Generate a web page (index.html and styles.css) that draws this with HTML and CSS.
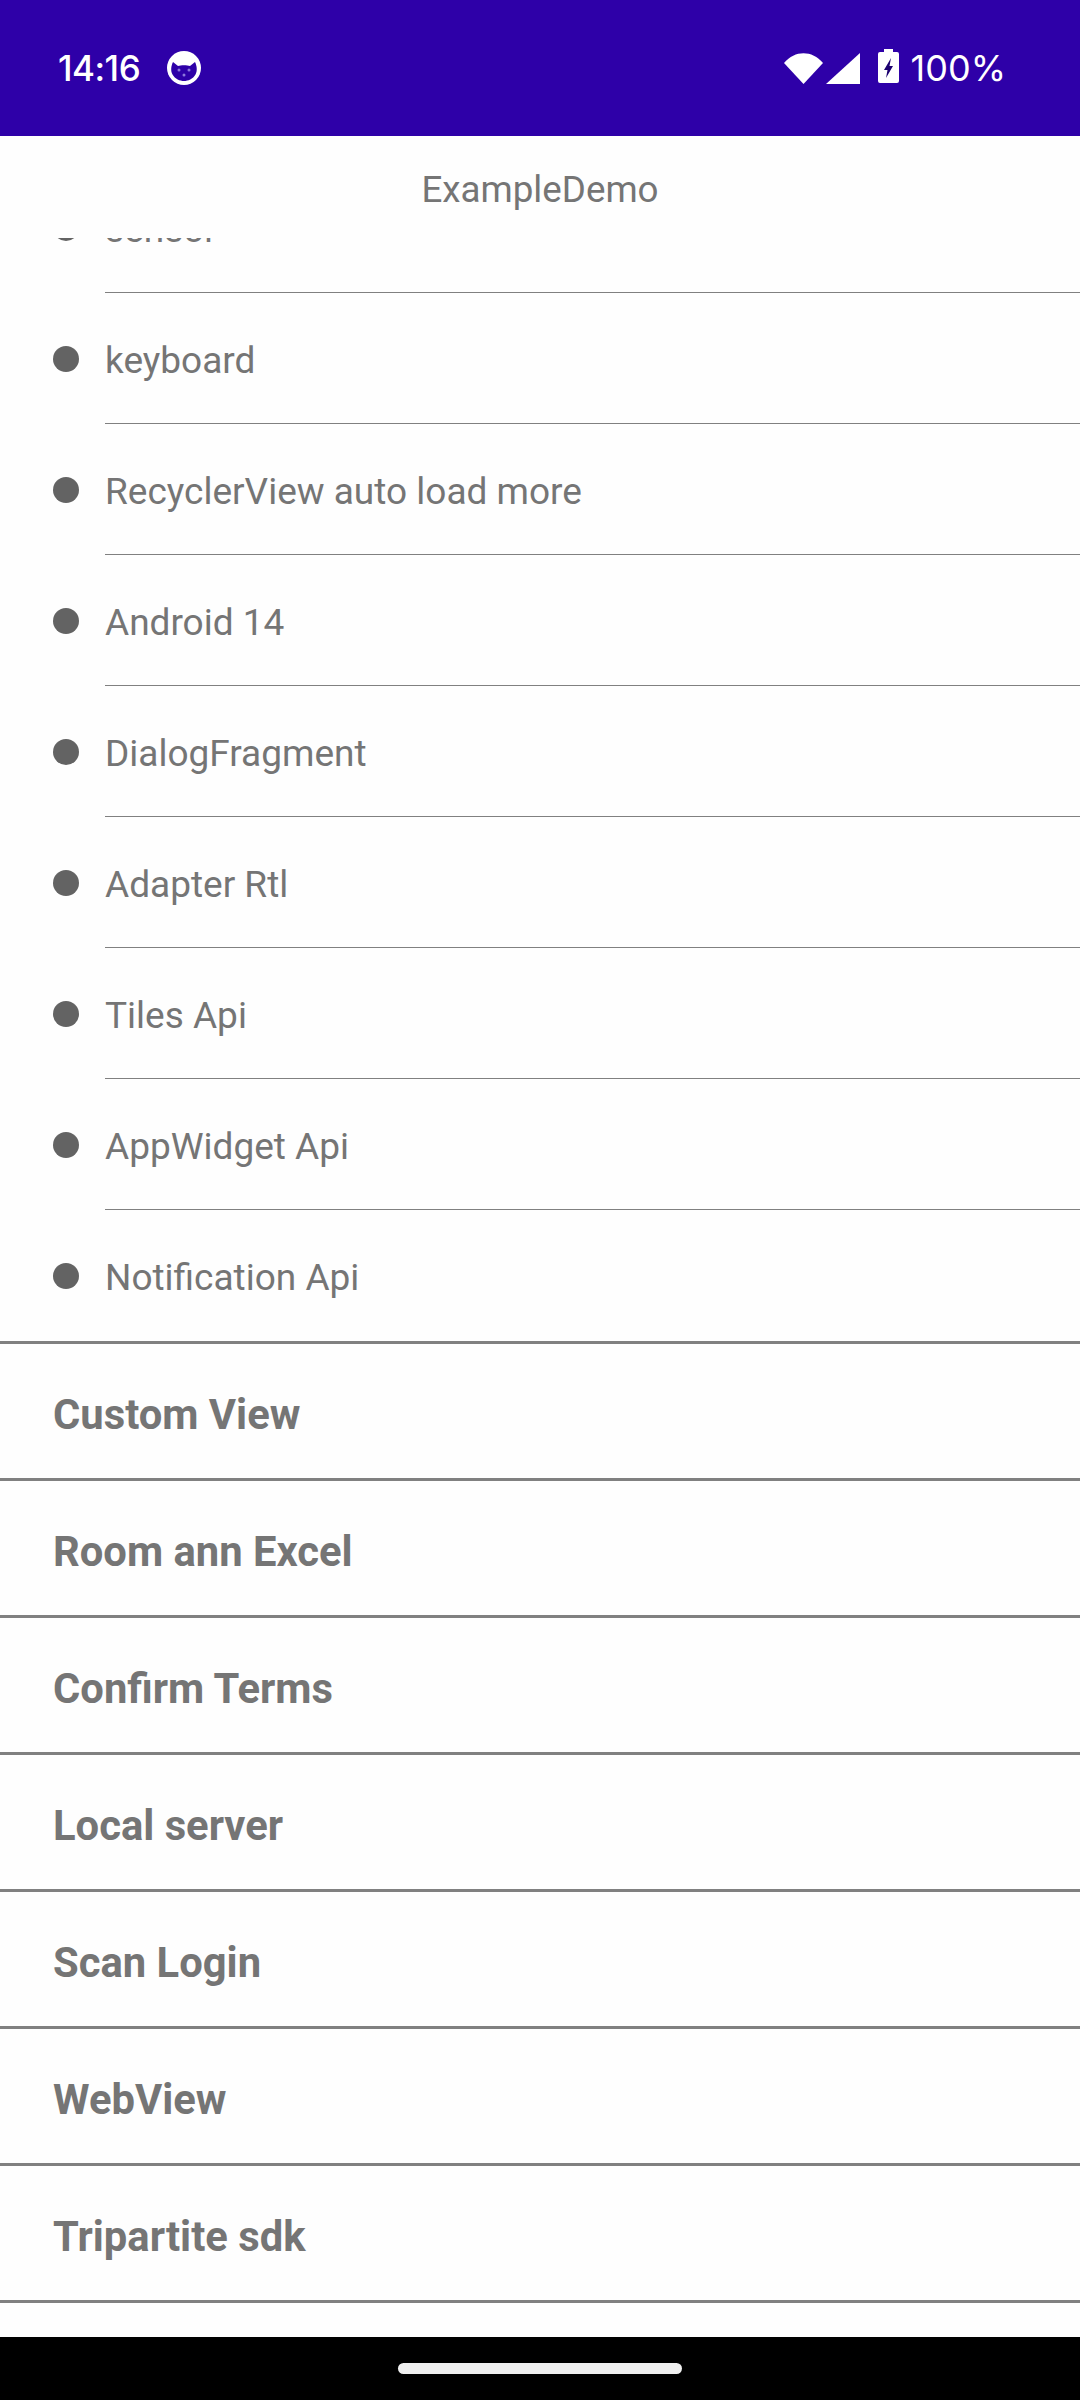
FILE: index.html
```html
<!DOCTYPE html>
<html lang="en">
<head>
    <meta charset="UTF-8">
    <meta name="viewport" content="width=device-width, initial-scale=1.0">
    <title>ExampleDemo</title>
    <link rel="stylesheet" href="styles.css">
</head>
<body>
    <div class="main">

        <div class="status-bar">
            <div class="status-left">
                <span class="time">14:16</span>
                <svg class="cat-icon" width="34" height="34" viewBox="0 0 34 34">
                    <circle cx="17" cy="17" r="17" fill="#fff"/>
                    <path d="M6 11 L11 15 C14 14 20 14 23 15 L28 11 C30 15 30.500 20 28.500 23.500 C26 28 21 30 17 30 C13 30 8 28 5.500 23.500 C3.500 20 4 15 6 11 Z" fill="#2e00a8"/>
                    <circle cx="12" cy="19" r="1.500" fill="#8d78dc"/>
                    <circle cx="22" cy="19" r="1.500" fill="#8d78dc"/>
                    <circle cx="17" cy="24" r="1.500" fill="#8d78dc"/>
                </svg>
            </div>
            <div class="status-right">
                <svg class="wifi-icon" width="39" height="31" viewBox="0 0 39 31">
                    <path d="M0 10 C11 -3 28 -3 39 10 L19.500 31 Z" fill="#fff"/>
                </svg>
                <svg class="signal-icon" width="34" height="31" viewBox="0 0 34 31">
                    <path d="M34 0 V31 H0 Z" fill="#fff"/>
                </svg>
                <svg class="battery-icon" width="21" height="34" viewBox="0 0 21 34">
                    <path d="M6 0 H15 V3 H19 Q21 3 21 5 V32 Q21 34 19 34 H2 Q0 34 0 32 V5 Q0 3 2 3 H6 Z" fill="#fff"/>
                    <path d="M13 9 L6 21 H9.500 L8 29 L15 17 H11.500 Z" fill="#1c0070"/>
                </svg>
                <span class="battery">100%</span>
            </div>
        </div>

        <div class="title-bar">ExampleDemo</div>

        <div class="list">
            <div class="sub-list">
                <div class="sub-item"><span class="dot"></span><span class="sub-text">sensor</span></div>
                <div class="sub-item"><span class="dot"></span><span class="sub-text">keyboard</span></div>
                <div class="sub-item"><span class="dot"></span><span class="sub-text">RecyclerView auto load more</span></div>
                <div class="sub-item"><span class="dot"></span><span class="sub-text">Android 14</span></div>
                <div class="sub-item"><span class="dot"></span><span class="sub-text">DialogFragment</span></div>
                <div class="sub-item"><span class="dot"></span><span class="sub-text">Adapter Rtl</span></div>
                <div class="sub-item"><span class="dot"></span><span class="sub-text">Tiles Api</span></div>
                <div class="sub-item"><span class="dot"></span><span class="sub-text">AppWidget Api</span></div>
                <div class="sub-item"><span class="dot"></span><span class="sub-text">Notification Api</span></div>
            </div>
            <div class="group">Custom View</div>
            <div class="group">Room ann Excel</div>
            <div class="group">Confirm Terms</div>
            <div class="group">Local server</div>
            <div class="group">Scan Login</div>
            <div class="group">WebView</div>
            <div class="group">Tripartite sdk</div>
        </div>

        <div class="nav-bar">
            <div class="nav-pill"></div>
        </div>

    </div>
</body>
</html>
```

FILE: styles.css
```css
* {
    margin: 0;
    padding: 0;
    box-sizing: border-box;
}

body {
    font-family: Roboto, sans-serif;
    background-color: #fefefe;
}

.main {
    width: 1080px;
    height: 2400px;
    display: flex;
    flex-direction: column;
    overflow: hidden;
    background-color: #fefefe;
    color: #757575;
}

.status-bar {
    height: 136px;
    flex-shrink: 0;
    background-color: #2e00a8;
    color: #fff;
    display: flex;
    justify-content: space-between;
    align-items: center;
    padding: 0 74px 0 58px;
    font-family: Inter, sans-serif;
}

.status-left,
.status-right {
    display: flex;
    align-items: center;
}

.time {
    font-size: 35px;
    font-weight: 500;
    letter-spacing: -0.5px;
    margin-right: 27px;
}

.battery {
    font-size: 36px;
    margin-left: 12px;
}

.signal-icon {
    margin-left: 3px;
}

.battery-icon {
    margin-left: 18px;
    margin-bottom: 4px;
}

.title-bar {
    height: 102px;
    flex-shrink: 0;
    text-align: center;
    font-size: 36.75px;
    line-height: 107px;
}

.list {
    flex: 1;
    overflow: hidden;
}

.sub-list {
    margin-top: -76px;
}

.sub-item {
    height: 131px;
    padding-left: 53px;
    display: flex;
    align-items: center;
    position: relative;
}

.sub-item::after {
    content: "";
    position: absolute;
    left: 105px;
    right: 0;
    bottom: 0;
    height: 1px;
    background-color: #808080;
}

.sub-item:last-child::after {
    display: none;
}

.dot {
    width: 26px;
    height: 26px;
    border-radius: 50%;
    background-color: #636363;
    margin-right: 26px;
}

.sub-text {
    font-size: 37px;
    padding-top: 3px;
}

.group {
    height: 137px;
    border-top: 3px solid #808080;
    padding: 6px 0 0 53px;
    display: flex;
    align-items: center;
    font-size: 41.75px;
    font-weight: 700;
}

.group:last-child {
    height: 140px;
    border-bottom: 3px solid #808080;
}

.nav-bar {
    height: 63px;
    flex-shrink: 0;
    background-color: #000;
    display: flex;
    justify-content: center;
    padding-top: 26px;
}

.nav-pill {
    width: 284px;
    height: 11px;
    border-radius: 6px;
    background-color: #f0f0f0;
}
```
